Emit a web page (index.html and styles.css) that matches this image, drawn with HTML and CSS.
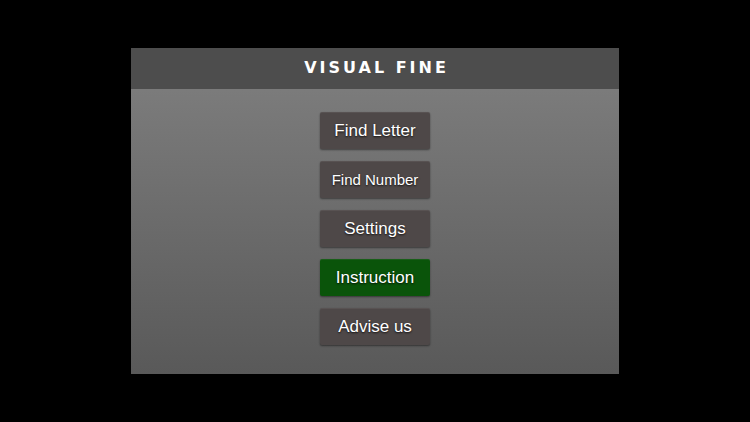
FILE: index.html
```html
<!DOCTYPE html>
<html>
<head>
<meta charset="utf-8">
<link rel="stylesheet" href="styles.css">
</head>
<body>
<div class="screen">
  <div class="panel">
    <div class="header"><span class="title">VISUAL FINE</span></div>
    <div class="menu">
      <button class="btn">Find Letter</button>
      <button class="btn small">Find Number</button>
      <button class="btn">Settings</button>
      <button class="btn green">Instruction</button>
      <button class="btn">Advise us</button>
    </div>
  </div>
</div>
</body>
</html>
```
FILE: styles.css
```css
html, body {
  margin: 0;
  padding: 0;
  background: #000;
}
.screen {
  width: 750px;
  height: 422px;
  display: flex;
  align-items: center;
  justify-content: center;
}
.panel {
  width: 488px;
  height: 326px;
  display: flex;
  flex-direction: column;
  background: linear-gradient(to bottom, #808080 0%, #595959 100%);
}
.header {
  height: 41px;
  background: #4d4d4d;
  display: flex;
  align-items: center;
  justify-content: center;
}
.title {
  font-family: "DejaVu Sans", sans-serif;
  font-weight: bold;
  font-size: 16px;
  letter-spacing: 3px;
  color: #fff;
  margin-left: 3px;
  margin-top: -2px;
}
.menu {
  flex: 1;
  display: flex;
  flex-direction: column;
  align-items: center;
  gap: 12px;
  padding-top: 23px;
}
.btn {
  width: 110px;
  height: 37px;
  border: none;
  border-radius: 2px;
  background: #4e4848;
  box-shadow: 0 1px 2px rgba(0,0,0,0.45), inset 0 1px 0 rgba(255,255,255,0.06);
  color: #fff;
  font-family: "Liberation Sans", Arial, sans-serif;
  font-size: 17px;
  text-shadow: 0 1px 2px rgba(0,0,0,0.8);
  padding: 0;
  display: flex;
  align-items: center;
  justify-content: center;
}
.btn.small {
  font-size: 15px;
}
.btn.green {
  background: #0a540a;
}
```
